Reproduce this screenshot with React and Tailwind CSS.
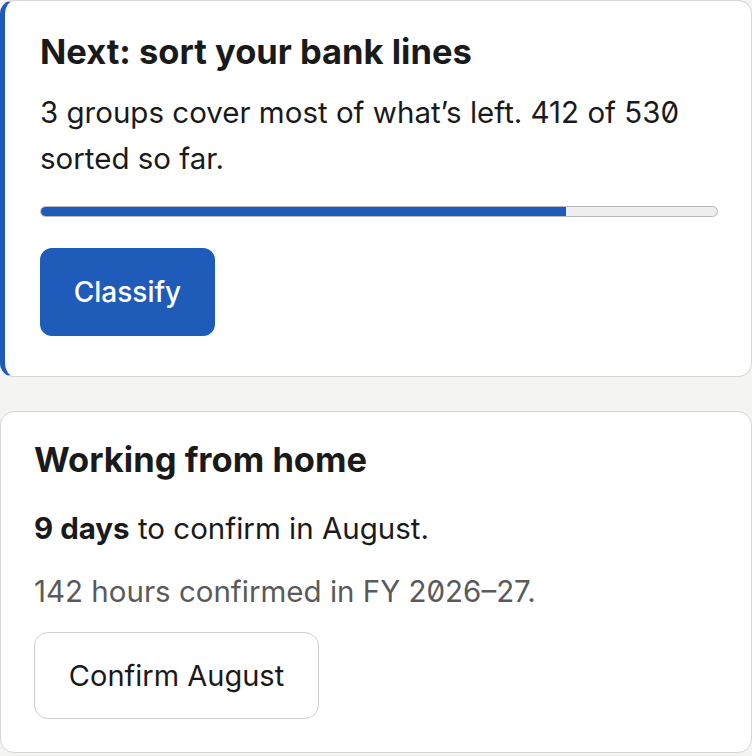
export default function App() {
  const font = { fontFamily: 'Inter, "Noto Sans", sans-serif' };
  return (
    <div className="min-h-[756px] w-[752px] bg-[#f4f4f2] text-[#1a1a1a]" style={font}>
      <div className="flex flex-col gap-[34px]">
        <div className="rounded-[14px] border border-[#d6d6d2] border-l-[5px] border-l-[#1f5bb8] bg-white pl-[35px] pr-[33px] pt-[31px] pb-[40px]">
          <h2 className="text-[34.5px] font-bold leading-[40px]">Next: sort your bank lines</h2>
          <p className="mt-[17px] text-[29.5px] leading-[46px] slashed-zero">
            3 groups cover most of what’s left. 412 of 530 sorted so far.
          </p>
          <div className="mt-[25px] h-[11px] w-full overflow-hidden rounded-full border border-[#b8b8b8] bg-[#eeeeee]">
            <div className="h-full bg-[#1f5bb8]" style={{ width: `${(412 / 530) * 100}%` }} />
          </div>
          <button className="mt-[31px] flex h-[88px] w-[175px] items-center justify-center rounded-[12px] bg-[#1f5bb8] text-[28px] font-medium text-white">
            Classify
          </button>
        </div>
        <div className="rounded-[14px] border border-[#d6d6d2] bg-white pl-[33px] pr-[33px] pt-[28px] pb-[33px]">
          <h2 className="text-[34.5px] font-bold leading-[40px]">Working from home</h2>
          <p className="mt-[28px] text-[29.5px] leading-[40px]">
            <span className="font-bold">9 days</span> to confirm in August.
          </p>
          <p className="mt-[23px] text-[29.5px] leading-[40px] text-[#5a5a5a] slashed-zero">
            142 hours confirmed in FY 2026–27.
          </p>
          <button className="mt-[21px] flex h-[87px] w-[285px] items-center justify-center rounded-[14px] border border-[#cfcfcb] bg-white text-[29px] text-[#1a1a1a]">
            Confirm August
          </button>
        </div>
      </div>
    </div>
  );
}
